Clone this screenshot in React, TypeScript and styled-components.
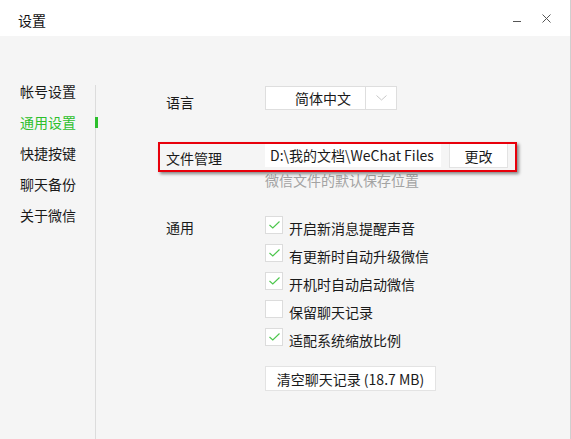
import { createGlobalStyle, styled } from "styled-components";

const GlobalStyle = createGlobalStyle`
  html, body {
    margin: 0;
    padding: 0;
    background: #ffffff;
  }
  body {
    font-family: "Noto Sans CJK SC", "Noto Sans", sans-serif;
    font-size: 14px;
    color: #1a1a1a;
  }
`;

const Window = styled.div`
  position: relative;
  width: 571px;
  height: 439px;
  box-sizing: border-box;
  border-right: 1px solid #cfcfcf;
  background: #f5f5f5;
  display: flex;
  flex-direction: column;
  overflow: hidden;
`;

const TitleBar = styled.div`
  height: 36px;
  background: #ffffff;
  display: flex;
  align-items: center;
  padding-left: 18px;
  flex-shrink: 0;
`;

const Title = styled.span`
  font-size: 14px;
  line-height: 20px;
  margin-top: 4px;
  color: #111;
`;

const Controls = styled.div`
  margin-left: auto;
  display: flex;
  align-items: center;
  gap: 15px;
  padding-right: 17px;
`;

const ControlButton = styled.button`
  width: 14px;
  height: 14px;
  padding: 0;
  border: none;
  background: none;
  display: grid;
  place-items: center;
`;

const Body = styled.div`
  flex: 1;
  display: flex;
`;

const Sidebar = styled.div`
  display: flex;
  flex-shrink: 0;
`;

const NavList = styled.nav`
  width: 95px;
  padding-top: 40px;
  display: flex;
  flex-direction: column;
`;

const NavItem = styled.div<{ $active?: boolean }>`
  position: relative;
  margin-left: 20px;
  height: 31px;
  line-height: 31px;
  font-size: 14px;
  color: ${(p) => (p.$active ? "#2cbf2c" : "#1a1a1a")};

  ${(p) =>
    p.$active &&
    `
    &::after {
      content: "";
      position: absolute;
      left: 100%;
      top: 10px;
      width: 3px;
      height: 11px;
      background: #2cbf2c;
    }
  `}
`;

const Rail = styled.div`
  width: 1px;
  margin-top: 49px;
  background: #dcdcdc;
`;

const Content = styled.div`
  flex: 1;
  padding-left: 70px;
  display: flex;
  flex-direction: column;
`;

const Row = styled.div<{ $top: number }>`
  display: flex;
  align-items: flex-start;
  margin-top: ${(p) => p.$top}px;
`;

const Label = styled.div<{ $nudge: number }>`
  width: 99px;
  flex-shrink: 0;
  height: 24px;
  line-height: 24px;
  margin-top: ${(p) => p.$nudge}px;
  margin-bottom: ${(p) => -p.$nudge}px;
  font-size: 14px;
`;

const Select = styled.div`
  width: 132px;
  height: 24px;
  box-sizing: border-box;
  background: #fff;
  border: 1px solid #dedede;
  display: flex;
`;

const SelectValue = styled.div`
  flex: 1;
  padding-left: 29px;
  line-height: 22px;
  font-size: 14px;
`;

const SelectArrow = styled.div`
  width: 30px;
  border-left: 1px solid #dedede;
  display: grid;
  place-items: center;
`;

const FieldColumn = styled.div`
  display: flex;
  flex-direction: column;
`;

const FieldLine = styled.div`
  display: flex;
  gap: 8px;
`;

const PathInput = styled.div`
  width: 176px;
  height: 24px;
  box-sizing: border-box;
  background: #fff;
  padding-left: 5px;
  line-height: 24px;
  font-size: 14px;
  white-space: nowrap;
  overflow: hidden;
`;

const Button = styled.button<{ $width: number }>`
  width: ${(p) => p.$width}px;
  height: 25px;
  box-sizing: border-box;
  background: #fff;
  border: 1px solid #e3e3e3;
  padding: 0;
  font-family: inherit;
  font-size: 14px;
  color: #1a1a1a;
`;

const Hint = styled.div`
  margin-top: 1px;
  height: 22px;
  line-height: 22px;
  font-size: 14px;
  color: #a3a3a3;
`;

const CheckList = styled.div`
  display: flex;
  flex-direction: column;
`;

const CheckRow = styled.label`
  display: flex;
  align-items: flex-start;
  gap: 6px;
  height: 28px;
  font-size: 14px;
`;

const Box = styled.span`
  width: 18px;
  height: 18px;
  box-sizing: border-box;
  background: #fff;
  border: 1px solid #dcdcdc;
  display: grid;
  place-items: center;
`;

const CheckText = styled.span`
  line-height: 20px;
  padding-top: 2px;
`;

const ClearRow = styled.div`
  margin-top: 10px;
  margin-left: 99px;
`;

const Annotation = styled.div`
  position: absolute;
  left: 158px;
  top: 142px;
  width: 359px;
  height: 30px;
  box-sizing: border-box;
  border: 2px solid #e8000b;
  box-shadow: 2px 2px 3px rgba(0, 0, 0, 0.45);
  pointer-events: none;
`;

const options = [
  { text: "开启新消息提醒声音", checked: true },
  { text: "有更新时自动升级微信", checked: true },
  { text: "开机时自动启动微信", checked: true },
  { text: "保留聊天记录", checked: false },
  { text: "适配系统缩放比例", checked: true },
];

const nav = ["帐号设置", "通用设置", "快捷按键", "聊天备份", "关于微信"];

function Check() {
  return (
    <svg width="11" height="8" viewBox="0 0 11 8">
      <polyline points="0.5,4 3.8,7 10.5,0.5" fill="none" stroke="#4cc64c" strokeWidth="1.1" />
    </svg>
  );
}

export default function App() {
  return (
    <>
      <GlobalStyle />
      <Window>
        <TitleBar>
          <Title>设置</Title>
          <Controls>
            <ControlButton aria-label="最小化">
              <svg width="8" height="14" viewBox="0 0 8 14">
                <line x1="0" y1="10.5" x2="8" y2="10.5" stroke="#555" strokeWidth="1" />
              </svg>
            </ControlButton>
            <ControlButton aria-label="关闭">
              <svg width="9" height="9" viewBox="0 0 9 9">
                <path d="M0.5 0.5L8.5 8.5M8.5 0.5L0.5 8.5" stroke="#555" strokeWidth="1" />
              </svg>
            </ControlButton>
          </Controls>
        </TitleBar>
        <Body>
          <Sidebar>
            <NavList>
              {nav.map((n) => (
                <NavItem key={n} $active={n === "通用设置"}>
                  {n}
                </NavItem>
              ))}
            </NavList>
            <Rail />
          </Sidebar>
          <Content>
            <Row $top={50}>
              <Label $nudge={4}>语言</Label>
              <Select>
                <SelectValue>简体中文</SelectValue>
                <SelectArrow>
                  <svg width="11" height="6" viewBox="0 0 11 6">
                    <polyline points="0.5,0.5 5.5,5 10.5,0.5" fill="none" stroke="#c8c8c8" strokeWidth="1" />
                  </svg>
                </SelectArrow>
              </Select>
            </Row>
            <Row $top={33}>
              <Label $nudge={3}>文件管理</Label>
              <FieldColumn>
                <FieldLine>
                  <PathInput>D:\我的文档\WeChat Files</PathInput>
                  <Button $width={59}>更改</Button>
                </FieldLine>
                <Hint>微信文件的默认保存位置</Hint>
              </FieldColumn>
            </Row>
            <Row $top={25}>
              <Label $nudge={-1}>通用</Label>
              <CheckList>
                {options.map((o) => (
                  <CheckRow key={o.text}>
                    <Box>{o.checked && <Check />}</Box>
                    <CheckText>{o.text}</CheckText>
                  </CheckRow>
                ))}
              </CheckList>
            </Row>
            <ClearRow>
              <Button $width={171}>清空聊天记录 (18.7 MB)</Button>
            </ClearRow>
          </Content>
        </Body>
        <Annotation />
      </Window>
    </>
  );
}
